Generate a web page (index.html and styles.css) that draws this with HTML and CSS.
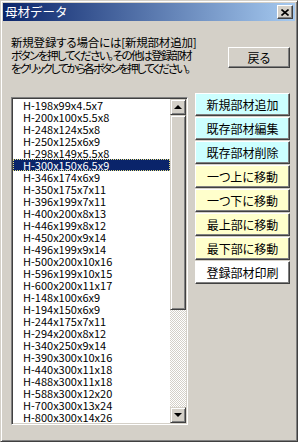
FILE: index.html
```html
<!DOCTYPE html>
<html lang="ja">
<head>
    <meta charset="UTF-8">
    <meta name="viewport" content="width=device-width, initial-scale=1.0">
    <title>母材データ</title>
    <link rel="stylesheet" href="styles.css">
</head>
<body>
    <div class="window">
        <div class="titlebar">
            <span class="title">母材データ</span>
            <span class="close-btn">
                <svg width="8" height="7" viewBox="0 0 8 7">
                    <path d="M0.5 0.5 L7.5 6.5 M7.5 0.5 L0.5 6.5" stroke="#000" stroke-width="1.6" fill="none"/>
                </svg>
            </span>
        </div>

        <div class="content">
            <div class="top-row">
                <p class="guide">
                    <span class="line line-1">新規登録する場合には[新規部材追加]</span>
                    <span class="line line-2">ボタンを押してください。その他は登録部材</span>
                    <span class="line line-3">をクリックしてから各ボタンを押してください。</span>
                </p>
                <button class="btn back-btn">戻る</button>
            </div>

            <div class="main-row">
                <div class="listbox">
                    <ul class="items">
                        <li>H-198x99x4.5x7</li>
                        <li>H-200x100x5.5x8</li>
                        <li>H-248x124x5x8</li>
                        <li>H-250x125x6x9</li>
                        <li>H-298x149x5.5x8</li>
                        <li class="selected">H-300x150x6.5x9</li>
                        <li>H-346x174x6x9</li>
                        <li>H-350x175x7x11</li>
                        <li>H-396x199x7x11</li>
                        <li>H-400x200x8x13</li>
                        <li>H-446x199x8x12</li>
                        <li>H-450x200x9x14</li>
                        <li>H-496x199x9x14</li>
                        <li>H-500x200x10x16</li>
                        <li>H-596x199x10x15</li>
                        <li>H-600x200x11x17</li>
                        <li>H-148x100x6x9</li>
                        <li>H-194x150x6x9</li>
                        <li>H-244x175x7x11</li>
                        <li>H-294x200x8x12</li>
                        <li>H-340x250x9x14</li>
                        <li>H-390x300x10x16</li>
                        <li>H-440x300x11x18</li>
                        <li>H-488x300x11x18</li>
                        <li>H-588x300x12x20</li>
                        <li>H-700x300x13x24</li>
                        <li>H-800x300x14x26</li>
                    </ul>
                    <div class="scrollbar">
                        <span class="sb-btn"><span class="arrow-up"></span></span>
                        <span class="sb-thumb"></span>
                        <span class="sb-track"></span>
                        <span class="sb-btn"><span class="arrow-down"></span></span>
                    </div>
                </div>

                <div class="actions">
                    <button class="btn cyan">新規部材追加</button>
                    <button class="btn cyan">既存部材編集</button>
                    <button class="btn cyan">既存部材削除</button>
                    <button class="btn yellow">一つ上に移動</button>
                    <button class="btn yellow">一つ下に移動</button>
                    <button class="btn yellow">最上部に移動</button>
                    <button class="btn yellow">最下部に移動</button>
                    <button class="btn white">登録部材印刷</button>
                </div>
            </div>
        </div>
    </div>
</body>
</html>
```

FILE: styles.css
```css
body {
    margin: 0;
    font-family: "Noto Sans CJK JP", sans-serif;
    color: #000;
}

.window {
    width: 298px;
    height: 442px;
    box-sizing: border-box;
    background-color: #d4d0c8;
    border: 1px solid;
    border-color: #d4d0c8 #404040 #404040 #d4d0c8;
    box-shadow: inset 1px 1px #fff, inset -1px -1px #808080;
    padding: 2px;
}

.titlebar {
    height: 18px;
    background: linear-gradient(to right, #0a246a, #a6caf0);
    display: flex;
    align-items: center;
    justify-content: space-between;
    padding: 0 2px;
}

.title {
    color: #fff;
    font-size: 12.5px;
    line-height: 18px;
}

.close-btn {
    width: 16px;
    height: 14px;
    box-sizing: border-box;
    background-color: #d4d0c8;
    border: 1px solid;
    border-color: #fff #404040 #404040 #fff;
    box-shadow: inset -1px -1px #808080;
    display: flex;
    align-items: center;
    justify-content: center;
}

.content {
    padding-left: 8px;
}

.top-row {
    height: 72px;
    display: flex;
    justify-content: space-between;
    align-items: flex-start;
}

.guide {
    margin: 15px 0 0;
    font-size: 11.5px;
    line-height: 13px;
    font-feature-settings: "palt";
    white-space: nowrap;
}

.guide .line {
    display: block;
}

.guide .line-1 {
    letter-spacing: -0.2px;
}

.guide .line-2 {
    letter-spacing: -1.5px;
}

.guide .line-3 {
    letter-spacing: -2px;
}

/* Classic raised button */
.btn {
    font-family: "Noto Sans CJK JP", sans-serif;
    font-size: 12px;
    color: #000;
    padding: 0;
    box-sizing: border-box;
    background-color: #d4d0c8;
    border: 1px solid;
    border-color: #fff #404040 #404040 #fff;
    box-shadow: inset -1px -1px #808080;
    font-feature-settings: "palt";
}

.back-btn {
    margin: 26px 5px 0 0;
    width: 62px;
    height: 21px;
}

.main-row {
    display: flex;
    align-items: flex-start;
}

.listbox {
    margin-top: 4px;
    width: 177px;
    height: 328px;
    box-sizing: border-box;
    background-color: #fff;
    border: 1px solid;
    border-color: #808080 #fff #fff #808080;
    box-shadow: inset 1px 1px #404040, inset -1px -1px #d4d0c8;
    padding: 1px;
    display: flex;
}

.items {
    flex: 1;
    list-style: none;
    margin: 0;
    padding: 0;
    overflow: hidden;
}

.items li {
    height: 12px;
    line-height: 12px;
    font-size: 11px;
    padding-left: 10px;
    white-space: nowrap;
}

.items li.selected {
    background-color: #0a246a;
    color: #fff;
    outline: 1px dotted #e8e080;
    outline-offset: -1px;
}

.scrollbar {
    width: 16px;
    display: flex;
    flex-direction: column;
}

.sb-btn,
.sb-thumb {
    box-sizing: border-box;
    background-color: #d4d0c8;
    border: 1px solid;
    border-color: #d4d0c8 #404040 #404040 #d4d0c8;
    box-shadow: inset 1px 1px #fff, inset -1px -1px #808080;
}

.sb-btn {
    height: 16px;
    display: flex;
    align-items: center;
    justify-content: center;
}

.sb-thumb {
    height: 195px;
}

.sb-track {
    flex: 1;
    background: repeating-conic-gradient(#fff 0 25%, #d4d0c8 0 50%) 0 0 / 2px 2px;
}

.arrow-up,
.arrow-down {
    width: 0;
    height: 0;
    border-left: 4px solid transparent;
    border-right: 4px solid transparent;
}

.arrow-up {
    border-bottom: 4px solid #000;
}

.arrow-down {
    border-top: 4px solid #000;
}

.actions {
    margin-left: 7px;
    width: 95px;
    display: flex;
    flex-direction: column;
    gap: 1px;
}

.actions .btn {
    height: 23px;
}

.cyan {
    background-color: #ccffff;
}

.yellow {
    background-color: #ffffcc;
}

.white {
    background-color: #fff;
}
```
